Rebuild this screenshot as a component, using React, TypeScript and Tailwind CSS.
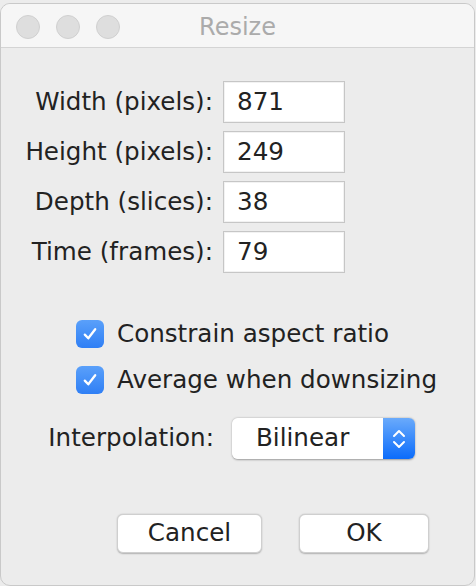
import { useState } from 'react';

const font = { fontFamily: '"DejaVu Sans", "Liberation Sans", sans-serif' };

const fields = [
  { label: 'Width (pixels):', value: '871' },
  { label: 'Height (pixels):', value: '249' },
  { label: 'Depth (slices):', value: '38' },
  { label: 'Time (frames):', value: '79' },
];

function CheckBox({ checked, onChange, label }: { checked: boolean; onChange: () => void; label: string }) {
  return (
    <label className="flex items-center h-[28px] leading-none cursor-pointer" onClick={onChange}>
      <span
        className={`w-[28px] h-[28px] rounded-[6px] flex items-center justify-center shrink-0 ${
          checked ? 'bg-[linear-gradient(#5aa0fa,#2f7ff5)]' : 'bg-white border border-[#b5b5b5]'
        }`}
      >
        {checked && (
          <svg width="18" height="18" viewBox="0 0 18 18" fill="none">
            <path d="M3.8 9.6 L7.3 13.3 L14.2 4.2" stroke="white" strokeWidth="2.3" strokeLinecap="round" strokeLinejoin="round" />
          </svg>
        )}
      </span>
      <span className="ml-[13px] text-[24.6px] text-[#222]">{label}</span>
    </label>
  );
}

export default function App() {
  const [constrain, setConstrain] = useState(true);
  const [average, setAverage] = useState(true);

  return (
    <div className="w-[476px] h-[586px] bg-[#ececec] pt-[3px] overflow-hidden" style={font}>
      <div className="w-[475px] h-[583px] rounded-t-[10px] rounded-b-[10px] border border-[#c9c9c9] bg-[#ececec] flex flex-col overflow-hidden">
        {/* title bar */}
        <div className="h-[44px] bg-[#f6f6f6] border-b border-[#d4d4d4] relative flex items-center shrink-0 pt-[2px]">
          <div className="flex gap-[16px] pl-[15px]">
            <span className="w-[24px] h-[24px] rounded-full bg-[#dedede] border border-[#d0d0d0]" />
            <span className="w-[24px] h-[24px] rounded-full bg-[#dedede] border border-[#d0d0d0]" />
            <span className="w-[24px] h-[24px] rounded-full bg-[#dedede] border border-[#d0d0d0]" />
          </div>
          <div className="absolute inset-0 pt-[3px] flex items-center justify-center text-[24px] text-[#ababab] pointer-events-none">
            Resize
          </div>
        </div>

        {/* fields */}
        <div className="flex flex-col gap-[8px] mt-[33px]">
          {fields.map((f) => (
            <div key={f.label} className="flex items-center">
              <div className="w-[213px] text-right text-[24.6px] text-[#222] pr-[1px]">{f.label}</div>
              <div className="ml-[9px] w-[122px] h-[42px] bg-white border border-[#c6c6c6] shadow-[inset_0_0_0_1px_#f2f2f2] flex items-center pl-[13px] text-[24.6px] text-[#222]">
                {f.value}
              </div>
            </div>
          ))}
        </div>

        {/* checkboxes */}
        <div className="flex flex-col gap-[18px] mt-[47px] pl-[75px]">
          <CheckBox checked={constrain} onChange={() => setConstrain(!constrain)} label="Constrain aspect ratio" />
          <CheckBox checked={average} onChange={() => setAverage(!average)} label="Average when downsizing" />
        </div>

        {/* interpolation */}
        <div className="flex items-center mt-[24px]">
          <div className="w-[213px] text-right text-[24.6px] text-[#222]">Interpolation:</div>
          <div className="ml-[18px] w-[183px] h-[41px] flex rounded-[6px] shadow-[0_0.5px_2px_rgba(0,0,0,0.35)] overflow-hidden">
            <div className="flex-1 bg-white flex items-center pl-[24px] text-[24.6px] text-[#222]">Bilinear</div>
            <div className="w-[32px] bg-[linear-gradient(#6aaafb,#0b6cfb)] flex items-center justify-center">
              <svg width="16" height="26" viewBox="0 0 16 26" fill="none">
                <path d="M3 10 L8 5 L13 10" stroke="white" strokeWidth="2" strokeLinecap="round" strokeLinejoin="round" />
                <path d="M3 16 L8 21 L13 16" stroke="white" strokeWidth="2" strokeLinecap="round" strokeLinejoin="round" />
              </svg>
            </div>
          </div>
        </div>

        {/* buttons */}
        <div className="flex mt-[55px] pl-[116px] gap-[37px]">
          <button className="w-[145px] h-[39px] bg-white rounded-[6px] border border-[#cfcfcf] shadow-[0_0.5px_1.5px_rgba(0,0,0,0.25)] text-[24.6px] text-[#222] flex items-center justify-center">
            Cancel
          </button>
          <button className="w-[130px] h-[39px] bg-white rounded-[6px] border border-[#cfcfcf] shadow-[0_0.5px_1.5px_rgba(0,0,0,0.25)] text-[24.6px] text-[#222] flex items-center justify-center">
            OK
          </button>
        </div>
      </div>
    </div>
  );
}
